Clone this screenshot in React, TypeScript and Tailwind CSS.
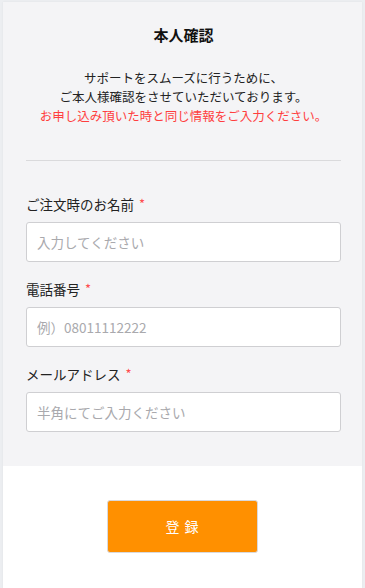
export default function App() {
    const fields = [
        { label: "ご注文時のお名前", placeholder: "入力してください", type: "text" },
        { label: "電話番号", placeholder: "例）08011112222", type: "tel" },
        { label: "メールアドレス", placeholder: "半角にてご入力ください", type: "email" },
    ];

    return (
        <div className="min-h-screen bg-[#eceef1] px-[3px] pt-[2px] font-['Noto_Sans_CJK_JP','Noto_Sans',sans-serif] text-[#222]">
            <div className="bg-white shadow-[0_0_2px_rgba(0,0,0,0.06)] min-h-[586px] flex flex-col">
                {/* Form section */}
                <div className="bg-[#f4f4f6] pt-[22px] pb-[34px] px-[23px] pr-[21px]">
                    <h1 className="text-[15px] leading-[22px] font-bold text-center text-[#111]">本人確認</h1>

                    <div className="mt-[22px] text-center text-[12.5px] leading-[19px]">
                        <p>サポートをスムーズに行うために、</p>
                        <p>ご本人様確認をさせていただいております。</p>
                        <p className="text-[#ff3e3e]">お申し込み頂いた時と同じ情報をご入力ください。</p>
                    </div>

                    <div className="mt-[35px] border-t border-[#dadadc]" />

                    <div className="mt-[33px] flex flex-col gap-[17px]">
                        {fields.map((f) => (
                            <div key={f.label}>
                                <label className="block text-[13.5px] leading-[20px] mb-2">
                                    {f.label}
                                    <span className="text-[#ff4d4f] ml-[5px] text-[13px] align-top">*</span>
                                </label>
                                <input
                                    type={f.type}
                                    placeholder={f.placeholder}
                                    className="block w-full h-[40px] bg-white border border-[#cfcfd2] rounded-[3px] px-[10px] text-[13.5px] placeholder:text-[#a9a9ad] outline-none"
                                />
                            </div>
                        ))}
                    </div>
                </div>

                {/* Submit */}
                <div className="flex-1 flex justify-center pt-[34px]">
                    <button className="w-[151px] h-[53px] bg-[#ff9000] border border-[#d9d9dc] rounded-[3px] text-white text-[14px] tracking-[1px]">
                        登 録
                    </button>
                </div>
            </div>
        </div>
    );
}
